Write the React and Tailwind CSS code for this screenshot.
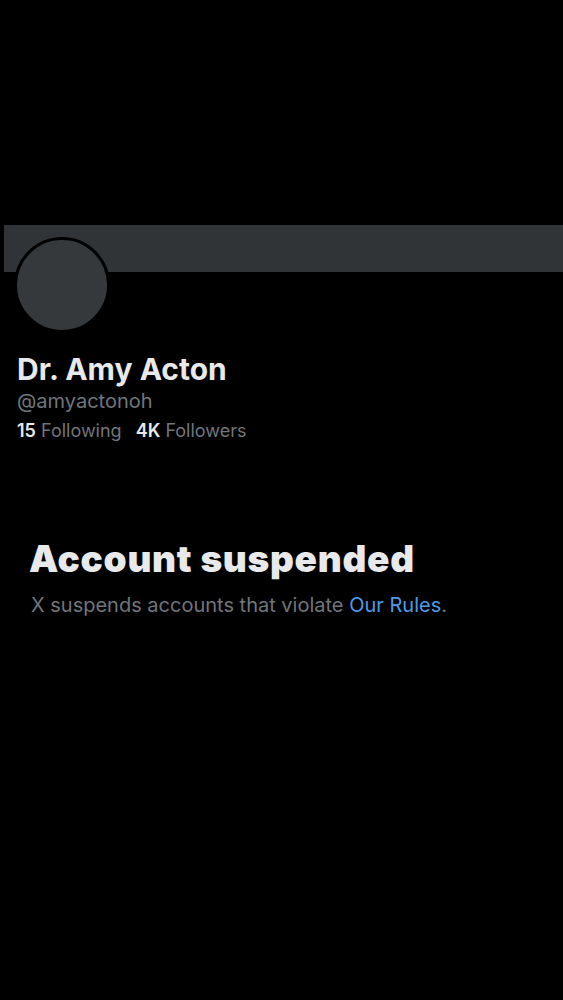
export default function App() {
  return (
    <div
      className="w-[563px] h-[1000px] bg-black overflow-hidden"
      style={{ fontFamily: "Inter, 'Liberation Sans', sans-serif" }}
    >
      <div className="h-[225px]" />
      <div className="ml-[4px] h-[47px] bg-[#303436]" />
      <div className="px-[17px]">
        <div className="-mt-[35px] ml-[-3px] w-[96px] h-[96px] rounded-full bg-[#35393b] border-[3px] border-black" />
        <div className="mt-[18px] text-[30px] leading-[36px] font-bold text-[#e7e9ea]">
          Dr. Amy Acton
        </div>
        <div className="mt-[2px] text-[20px] leading-[24px] text-[#71767b]">@amyactonoh</div>
        <div className="mt-[6px] flex gap-[14px] text-[18px] leading-[24px] text-[#71767b]">
          <span>
            <span className="font-semibold text-[#e7e9ea]">15</span> Following
          </span>
          <span>
            <span className="font-semibold text-[#e7e9ea]">4K</span> Followers
          </span>
        </div>
      </div>
      <div className="px-[31px] mt-[94px]">
        <div className="ml-[-2px] text-[37px] leading-[44px] font-black text-[#e7e9ea] tracking-[0.7px]">
          Account suspended
        </div>
        <div className="mt-[12px] text-[20px] leading-[24px] text-[#71767b]">
          X suspends accounts that violate <span className="text-[#4b9be6]">Our Rules</span>
          <span className="text-[#71767b]">.</span>
        </div>
      </div>
    </div>
  );
}
